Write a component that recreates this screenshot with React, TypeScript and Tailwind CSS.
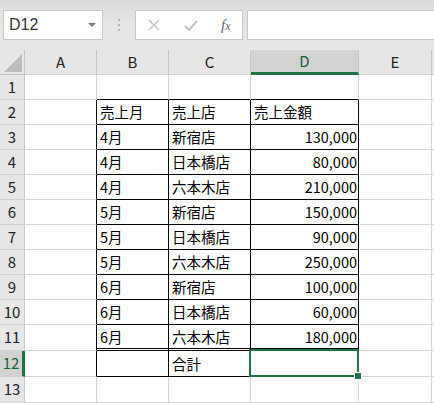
import React from 'react';

const cols = ['A', 'B', 'C', 'D', 'E', ''];

// table content for columns B, C, D (rows 2..12)
const tableRows: Record<number, [string, string, string]> = {
  2: ['売上月', '売上店', '売上金額'],
  3: ['4月', '新宿店', '130,000'],
  4: ['4月', '日本橋店', '80,000'],
  5: ['4月', '六本木店', '210,000'],
  6: ['5月', '新宿店', '150,000'],
  7: ['5月', '日本橋店', '90,000'],
  8: ['5月', '六本木店', '250,000'],
  9: ['6月', '新宿店', '100,000'],
  10: ['6月', '日本橋店', '60,000'],
  11: ['6月', '六本木店', '180,000'],
  12: ['', '合計', ''],
};

const rowHeight = (r: number) => (r >= 11 ? 'h-[26px]' : 'h-[25px]');

const App: React.FC = () => {
  const rows = Array.from({ length: 13 }, (_, i) => i + 1);

  return (
    <div
      className="w-[434px] h-[403px] overflow-hidden bg-white text-black"
      style={{ fontFamily: '"Noto Sans CJK JP", "Noto Sans", sans-serif' }}
    >
      {/* formula bar */}
      <div className="h-[50px] flex items-start pt-[10px] bg-gradient-to-b from-[#dadada] via-[#e6e6e6] to-[#e6e6e6]">
        <div className="ml-[3px] w-[100px] h-[30px] bg-white border border-[#c6c6c6] flex items-center justify-between pl-[5px] pr-[5px]">
          <span className="text-[16px] text-[#333]" style={{ fontFamily: '"Liberation Sans", sans-serif' }}>D12</span>
          <svg width="10" height="6" viewBox="0 0 10 6">
            <path d="M1 1h8L5 5z" fill="#7a7a7a" />
          </svg>
        </div>
        <div className="w-[32px] h-[30px] flex flex-col items-center justify-center gap-[3px]">
          <span className="w-[2px] h-[2px] bg-[#b4b4b4]" />
          <span className="w-[2px] h-[2px] bg-[#b4b4b4]" />
          <span className="w-[2px] h-[2px] bg-[#b4b4b4]" />
        </div>
        <div className="w-[108px] h-[30px] bg-white border border-[#c6c6c6] flex items-center">
          <svg className="ml-[12px]" width="12" height="12" viewBox="0 0 12 12">
            <path d="M1 1l10 10M11 1L1 11" stroke="#c4c4c4" strokeWidth="1.5" />
          </svg>
          <svg className="ml-[24px]" width="14" height="11" viewBox="0 0 14 11">
            <path d="M1 6l4 4L13 1" stroke="#c4c4c4" strokeWidth="2" fill="none" />
          </svg>
          <span className="ml-[23px] text-[15px] italic text-[#666]" style={{ fontFamily: '"Liberation Serif", serif' }}>
            f<span className="text-[12px]">x</span>
          </span>
        </div>
        <div className="ml-[4px] flex-1 h-[30px] bg-white border border-[#c6c6c6] border-r-0" />
      </div>

      {/* sheet grid */}
      <div className="grid grid-cols-[25px_72px_72px_82px_108px_73px_1fr]">
        {/* header row */}
        <div className="h-[25px] bg-[#e6e6e6] border-r border-b border-r-[#c6c6c6] border-b-[#c6c6c6] flex items-end justify-end p-[2px]">
          <svg width="18" height="18" viewBox="0 0 18 18">
            <path d="M18 0V18H0z" fill="#bcbcbc" />
          </svg>
        </div>
        {cols.map((c) =>
          c === 'D' ? (
            <div
              key={c}
              className="h-[25px] bg-[#d2d2d2] border-r border-r-[#c6c6c6] border-b-[3px] border-b-[#217346] flex items-center justify-center text-[15px] text-[#1e5c3a]"
            >
              {c}
            </div>
          ) : (
            <div
              key={c || 'F'}
              className="h-[25px] bg-[#e6e6e6] border-r border-b border-r-[#c6c6c6] border-b-[#d4d4d4] flex items-center justify-center text-[15px] text-[#222]"
            >
              {c}
            </div>
          )
        )}

        {rows.map((r) => {
          const h = rowHeight(r);
          const selRow = r === 12;
          const cells: React.ReactNode[] = [];

          cells.push(
            <div
              key={`h${r}`}
              className={`${h} flex items-center justify-center text-[15px] border-b border-b-[#d0d0d0] ${
                selRow
                  ? 'bg-[#d2d2d2] text-[#1e5c3a] border-r-[3px] border-r-[#217346]'
                  : 'bg-[#e6e6e6] text-[#222] border-r border-r-[#c6c6c6]'
              }`}
            >
              {r}
            </div>
          );

          cols.forEach((c, ci) => {
            const inTable = r >= 2 && r <= 12 && ci >= 1 && ci <= 3;
            const rightBlack = r >= 2 && r <= 12 && ci >= 0 && ci <= 3;
            const bottomBlack = r >= 1 && r <= 12 && ci >= 1 && ci <= 3;
            const dbl = r === 11 && ci >= 1 && ci <= 3;
            const rCls = rightBlack ? 'border-r-black' : 'border-r-[#d4d4d4]';
            const bCls = dbl
              ? 'border-b-[3px] border-double border-b-black'
              : bottomBlack
              ? 'border-b border-b-black'
              : 'border-b border-b-[#d4d4d4]';
            const text = inTable ? tableRows[r][ci - 1] : '';
            const isNum = ci === 3 && r >= 3;
            const sel = r === 12 && c === 'D';
            cells.push(
              <div
                key={`${r}-${ci}`}
                className={`${h} ${sel ? 'relative' : ''} border-r ${rCls} ${bCls} flex items-center pt-[1px] text-[14.5px] leading-none ${
                  isNum ? 'justify-end pr-[1px]' : 'pl-[3px]'
                }`}
              >
                {text}
                {sel && (
                  <div className="absolute z-10 -left-[2px] -top-[2px] -right-[1px] -bottom-[1px] border-2 border-[#217346]">
                    <div className="absolute -right-[5px] -bottom-[5px] w-[8px] h-[8px] bg-[#217346] border border-white" />
                  </div>
                )}
              </div>
            );
          });
          return cells;
        })}
      </div>
    </div>
  );
};

export default App;
